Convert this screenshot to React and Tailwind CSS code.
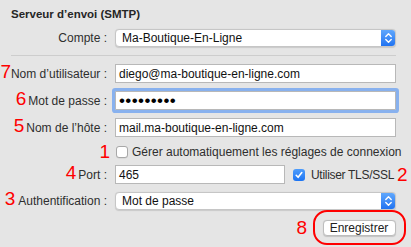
import React from 'react';

const Num = ({ children, className = '' }) => (
  <span className={`text-[19px] leading-[10px] text-[#ff0000] ${className}`}>{children}</span>
);

const Label = ({ num, numClass = 'mr-[2px]', children, width = 'w-[107px]' }) => (
  <div className={`${width} shrink-0 flex items-baseline justify-end`}>
    {num && <Num className={numClass}>{num}</Num>}
    {children && <span className="text-[12px] leading-[14px] text-[#2e2e2e] whitespace-nowrap">{children}</span>}
  </div>
);

const Field = ({ children, className = 'w-[281px]' }) => (
  <div className={`${className} h-[19px] ml-[8px] flex items-center bg-white border border-[#b8b8b8] pl-[3px] text-[12px] leading-[14px] text-[#111] whitespace-nowrap overflow-hidden`}>
    {children}
  </div>
);

const Chevrons = () => (
  <svg width="15" height="18" viewBox="0 0 15 18" fill="none">
    <path d="M4.8 7.4 L7.5 4.8 L10.2 7.4" stroke="white" strokeWidth="1.4" strokeLinecap="round" strokeLinejoin="round" />
    <path d="M4.8 10.6 L7.5 13.2 L10.2 10.6" stroke="white" strokeWidth="1.4" strokeLinecap="round" strokeLinejoin="round" />
  </svg>
);

const Select = ({ value }) => (
  <div className="w-[281px] h-[18px] ml-[8px] flex items-center bg-white border border-[#c6c6c6] rounded-[4px] shadow-[0_0.5px_1px_rgba(0,0,0,0.12)] overflow-hidden">
    <span className="flex-1 pl-[6px] text-[12px] leading-[14px] text-[#111] whitespace-nowrap">{value}</span>
    <span className="w-[15px] h-[18px] -mr-px bg-linear-to-b from-[#63aafd] to-[#1a6ff0] flex items-center justify-center">
      <Chevrons />
    </span>
  </div>
);

const Check = ({ checked, className = '' }) =>
  checked ? (
    <span className={`w-[12px] h-[12px] shrink-0 rounded-[3px] bg-linear-to-b from-[#4d9cfb] to-[#1b74f3] flex items-center justify-center ${className}`}>
      <svg width="12" height="12" viewBox="0 0 12 12" fill="none">
        <path d="M3.2 6.3 L5.1 8.3 L8.8 3.6" stroke="white" strokeWidth="1.6" strokeLinecap="round" strokeLinejoin="round" />
      </svg>
    </span>
  ) : (
    <span className={`block w-[12px] h-[12px] shrink-0 rounded-[3px] border border-[#a8a8a8] bg-white shadow-[0_0.5px_0.5px_rgba(0,0,0,0.1)] ${className}`} />
  );

export default function App() {
  return (
    <div className="w-[411px] h-[247px] bg-[#e5e5e5] overflow-hidden flex flex-col font-['Liberation_Sans',Arial,sans-serif]">
      {/* Title */}
      <div className="ml-[11px] mt-[7px] text-[11.5px] leading-[14px] font-bold text-[#262626]">
        Serveur d’envoi (SMTP)
      </div>

      {/* Compte */}
      <div className="mt-[8px] h-[18px] flex items-center">
        <Label>Compte :</Label>
        <Select value="Ma-Boutique-En-Ligne" />
      </div>

      <div className="mt-[8px] ml-[11px] w-[385px] h-px bg-[#cdcdcd]" />

      {/* Nom d'utilisateur */}
      <div className="mt-[8px] h-[19px] flex items-center">
        <Label num="7" numClass="">Nom d’utilisateur :</Label>
        <Field>diego@ma-boutique-en-ligne.com</Field>
      </div>

      {/* Mot de passe */}
      <div className="mt-[8px] h-[19px] flex items-center">
        <Label num="6">Mot de passe :</Label>
        <Field className="w-[281px] ring-[3px] ring-[#88b1ee] rounded-[1px]">
          <span className="text-[17px] leading-[14px] tracking-[0.4px] text-black">•••••••••</span>
        </Field>
      </div>

      {/* Nom de l'hôte */}
      <div className="mt-[8px] h-[19px] flex items-center">
        <Label num="5">Nom de l’hôte :</Label>
        <Field>mail.ma-boutique-en-ligne.com</Field>
      </div>

      {/* Gérer automatiquement */}
      <div className="mt-[5px] h-[19px] flex items-center">
        <Label num="1" numClass="" width="w-[110px]" />
        <Check className="ml-[6px]" />
        <span className="ml-[4px] text-[12px] leading-[14px] text-[#2e2e2e] whitespace-nowrap">
          Gérer automatiquement les réglages de connexion
        </span>
      </div>

      {/* Port */}
      <div className="mt-[4px] h-[19px] flex items-center">
        <Label num="4">Port :</Label>
        <Field className="w-[170px]">465</Field>
        <Check checked className="ml-[8px]" />
        <span className="ml-[6px] text-[12px] leading-[14px] tracking-[-0.3px] text-[#2e2e2e] whitespace-nowrap">Utiliser TLS/SSL</span>
        <Num className="ml-[3px] leading-[14px]">2</Num>
      </div>

      {/* Authentification */}
      <div className="mt-[8px] h-[18px] flex items-center">
        <Label num="3" numClass="mr-[3px]">Authentification :</Label>
        <Select value="Mot de passe" />
      </div>

      {/* Enregistrer */}
      <div className="flex items-center justify-end pr-[5px]">
        <Num className="mr-[6px] leading-[20px]">8</Num>
        <div className="border-[2.5px] border-[#ff0000] rounded-[14px] pl-[7.5px] pr-[8.5px] py-[7.5px] flex">
          <button className="w-[73px] h-[16px] bg-white border border-[#bdbdbd] rounded-[4px] shadow-[0_0.5px_1px_rgba(0,0,0,0.15)] flex items-center justify-center text-[12px] leading-[14px] text-[#222]">
            Enregistrer
          </button>
        </div>
      </div>
    </div>
  );
}
